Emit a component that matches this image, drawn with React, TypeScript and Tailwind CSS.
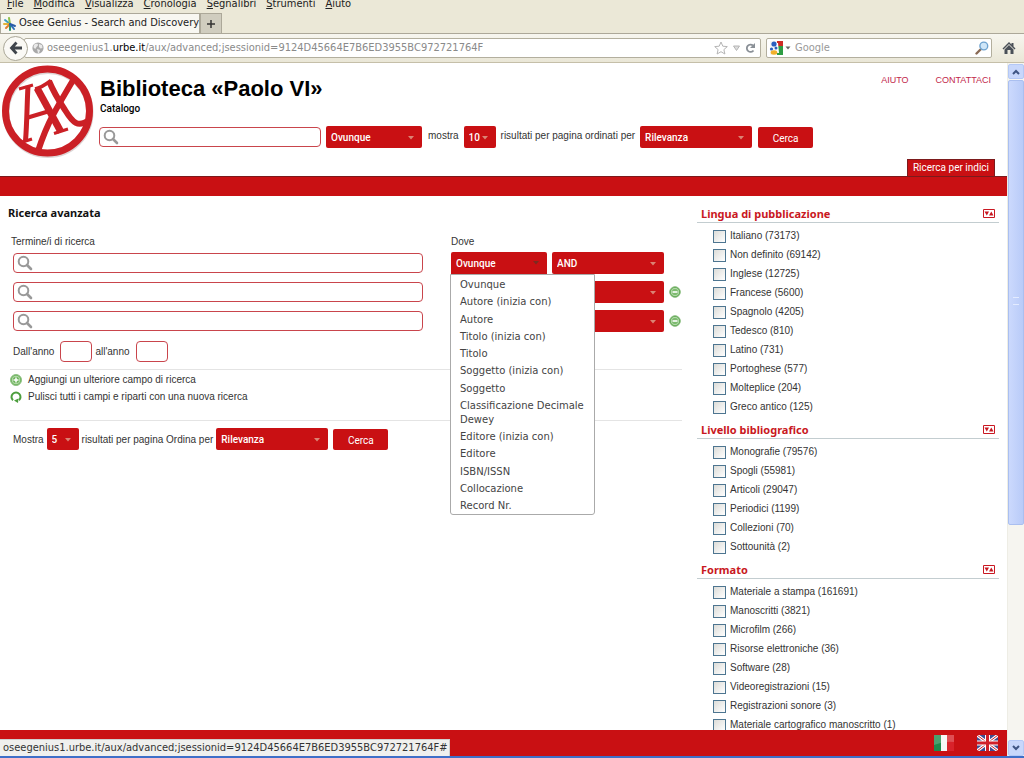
import { useState } from 'react';

const UI = "font-['DejaVu_Sans_Condensed','DejaVu_Sans',sans-serif]";
const CONTROL = "font-['Roboto',sans-serif]";
const HEADING = "font-['Noto_Sans',sans-serif]";
const ARIAL = "font-['Liberation_Sans',sans-serif]";

const menus = ['File', 'Modifica', 'Visualizza', 'Cronologia', 'Segnalibri', 'Strumenti', 'Aiuto'];

const fields = [
  'Ovunque',
  'Autore (inizia con)',
  'Autore',
  'Titolo (inizia con)',
  'Titolo',
  'Soggetto (inizia con)',
  'Soggetto',
  'Classificazione Decimale Dewey',
  'Editore (inizia con)',
  'Editore',
  'ISBN/ISSN',
  'Collocazione',
  'Record Nr.',
];

const facets = [
  {
    title: 'Lingua di pubblicazione',
    items: [
      'Italiano (73173)',
      'Non definito (69142)',
      'Inglese (12725)',
      'Francese (5600)',
      'Spagnolo (4205)',
      'Tedesco (810)',
      'Latino (731)',
      'Portoghese (577)',
      'Molteplice (204)',
      'Greco antico (125)',
    ],
  },
  {
    title: 'Livello bibliografico',
    items: [
      'Monografie (79576)',
      'Spogli (55981)',
      'Articoli (29047)',
      'Periodici (1199)',
      'Collezioni (70)',
      'Sottounità (2)',
    ],
  },
  {
    title: 'Formato',
    items: [
      'Materiale a stampa (161691)',
      'Manoscritti (3821)',
      'Microfilm (266)',
      'Risorse elettroniche (36)',
      'Software (28)',
      'Videoregistrazioni (15)',
      'Registrazioni sonore (3)',
      'Materiale cartografico manoscritto (1)',
    ],
  },
];

const Favicon = () => (
  <svg viewBox="0 0 14 14" className="h-[14px] w-[14px] shrink-0" fill="none" strokeWidth="2" strokeLinecap="round">
    <path d="M7 7 2 3" stroke="#3f9fc4" />
    <path d="M7 7 6 1" stroke="#8fc04a" />
    <path d="M7 7 1 7" stroke="#e2b33a" />
    <path d="M7 7 3 11" stroke="#e07f2e" />
    <path d="M7 7 7 13" stroke="#2f8f6a" />
    <path d="M7 7 11 12" stroke="#2c6fb7" />
    <path d="M7 7 12 9" stroke="#2a5ca8" />
  </svg>
);

const Globe = () => (
  <svg viewBox="0 0 12 12" className="h-3 w-3 shrink-0">
    <circle cx="6" cy="6" r="5.6" fill="#a9a9a9" />
    <path d="M2 3c2-2 4-1 4 0S4 5 4 6 2 7 1.500 5zM7 2l3 1 .5 3-2 .5L7 5zM5 7l3 1-1 3H6z" fill="#e9e9e9" />
  </svg>
);

const Logo = () => (
  <svg viewBox="0 0 94 96" className="h-24 w-[94px] shrink-0" fill="none" stroke="#cb2026">
    <circle cx="48" cy="49.500" r="42" stroke="#ddd5d5" strokeWidth="7" />
    <circle cx="47.500" cy="48" r="42" strokeWidth="7" />
    <path d="M75 14C66 29 60 39 53 52S42 76 38 88" strokeWidth="6" />
    <path d="M37 25 61 69" strokeWidth="7" />
    <path d="M28 23C27 40 27 60 25.500 78" strokeWidth="5" />
    <path d="M28 54.500 48 48.500" strokeWidth="4" />
    <path d="M19 26 33 22M21 79.500 32 76M54 70.500 68 66" strokeWidth="3" />
    <path d="M35 26C41 25 45 22 51 17.500" strokeWidth="3.500" />
    <path d="M49 18C54 30 59 38 65 47 73 60 78 65 89 57" strokeWidth="6" />
  </svg>
);

const SearchIcon = () => (
  <svg viewBox="0 0 16 16" className="h-4 w-4 shrink-0" fill="none" stroke="#999">
    <circle cx="6.500" cy="6.500" r="4.800" strokeWidth="2" />
    <path d="M10 10 14 14" strokeWidth="2.600" strokeLinecap="round" />
  </svg>
);

const Plus = () => (
  <svg viewBox="0 0 12 12" className="h-3 w-3 shrink-0">
    <circle cx="6" cy="6" r="5.500" fill="#6cb35b" stroke="#8fc184" />
    <circle cx="6" cy="6" r="3.800" fill="none" stroke="#cfe8c9" strokeWidth="0.800" />
    <path d="M6 3.500v5M3.500 6h5" stroke="#fff" strokeWidth="1.500" />
  </svg>
);

const Minus = () => (
  <svg viewBox="0 0 12 12" className="h-3 w-3 shrink-0">
    <circle cx="6" cy="6" r="5.300" fill="#4f9f40" stroke="#8abd7f" />
    <circle cx="6" cy="6" r="3.800" fill="#7dbb6f" stroke="#cfe8c9" strokeWidth="0.800" />
    <path d="M3.500 6h5" stroke="#fff" strokeWidth="1.600" />
  </svg>
);

const Reload = () => (
  <svg viewBox="0 0 12 12" className="h-3 w-3 shrink-0" fill="none" stroke="#4c9e3d" strokeWidth="2">
    <path d="M3 9.300A4.500 4.500 0 1 1 9 9.300" />
    <path d="M4 9.500 8.500 7.500 8 12z" fill="#4c9e3d" stroke="none" />
  </svg>
);

const SearchInput = ({ label, className = '' }: { label: string; className?: string }) => (
  <label className={`flex h-[20px] items-center rounded-[4px] border border-[#c9454c] bg-white pl-[3px] ${className}`}>
    <SearchIcon />
    <input aria-label={label} className="h-4 w-full min-w-0 bg-transparent px-1 text-[11px] outline-none" />
  </label>
);

type SelectProps = {
  label: string;
  options: string[];
  className: string;
};

const RedSelect = ({ label, options, className }: SelectProps) => (
  <span className={`relative inline-block h-[22px] shrink-0 ${className}`}>
    <select
      aria-label={label}
      className={`block h-full w-full appearance-none rounded-[2px] bg-[#c91013] pl-[5px] text-[10px] font-medium text-white outline-none ${CONTROL}`}
    >
      {options.map((option) => (
        <option key={option}>{option}</option>
      ))}
    </select>
    <svg viewBox="0 0 6 4" className="pointer-events-none absolute top-[10px] right-2 h-1 w-[6px]">
      <path d="M0 0h6L3 3.500z" fill="#dc8374" />
    </svg>
  </span>
);

const SearchButton = () => (
  <button className={`h-[21px] w-[55px] shrink-0 rounded-[2px] bg-[#c91013] pt-[2px] text-[10px] text-white ${CONTROL}`}>
    Cerca
  </button>
);

const BrowserBar = () => (
  <div className={`shrink-0 bg-[#ebe8d7] ${UI}`}>
    <div className="flex h-[13px] items-end gap-[10px] overflow-hidden pl-[7px] text-[11px] leading-[18px] text-[#222]">
      {menus.map((menu) => (
        <button key={menu} className="h-[18px]">
          <span className="underline">{menu[0]}</span>
          {menu.slice(1)}
        </button>
      ))}
    </div>
    <div className="flex h-[21px] border-b border-[#aca899]">
      <div className="flex w-[200px] items-center gap-[2px] overflow-hidden border border-b-0 border-[#aca899] bg-[#f8f7f1] pl-[2px] text-[11px] whitespace-nowrap text-[#222]">
        <Favicon />
        Osee Genius - Search and Discovery
      </div>
      <button aria-label="Nuova scheda" className="flex w-[22px] items-center justify-center border border-b-0 border-[#aca899] bg-[#d0cdbf]">
        <svg viewBox="0 0 8 8" className="h-2 w-2">
          <path d="M4 0v8M0 4h8" stroke="#333" strokeWidth="1.500" />
        </svg>
      </button>
    </div>
    <div className="flex h-[29px] items-center border-b border-[#c5bfa9] bg-gradient-to-b from-[#f7f6ef] to-[#eae7d7] pr-2">
      <button aria-label="Indietro" className="z-10 ml-[3px] flex h-[25px] w-[25px] shrink-0 items-center justify-center rounded-full border border-[#aaa797] bg-[#faf9f5]">
        <svg viewBox="0 0 14 14" className="h-[14px] w-[14px]" fill="none" stroke="#3f444b" strokeWidth="2.800">
          <path d="M7.500 1.500 2.500 7l5 5.500M2.500 7H13" />
        </svg>
      </button>
      <div className="-ml-1 flex h-5 flex-1 items-center rounded-[2px] border border-[#b3af9e] bg-white pr-1 pl-[7px] text-[11px]">
        <Globe />
        <span className="ml-[3px] flex-1 whitespace-nowrap text-[#8a8a8a]">
          oseegenius1.<span className="text-black">urbe.it</span>/aux/advanced;jsessionid=9124D45664E7B6ED3955BC972721764F
        </span>
        <svg viewBox="0 0 42 14" className="h-[14px] w-[42px] shrink-0" fill="none">
          <path d="m7 1 1.800 4.200 4.500.4-3.400 3 1 4.400L7 10.700 3.100 13l1-4.400-3.400-3 4.500-.4z" stroke="#b5b5b5" />
          <path d="M19.500 5h6l-3 4.500z" fill="#ddd" stroke="#b5b5b5" />
          <path d="M39.500 9.500A3.700 3.700 0 1 1 39 4.500" stroke="#8a9097" strokeWidth="1.800" />
          <path d="M41 2v5h-5z" fill="#8a9097" />
        </svg>
      </div>
      <label className="ml-[5px] flex h-5 w-[226px] shrink-0 items-center rounded-[2px] border border-[#b3af9e] bg-white px-[2px]">
        <svg viewBox="0 0 22 14" className="h-[14px] w-[22px] shrink-0">
          <rect x="1" width="13" height="14" fill="#f6f6f6" />
          <path d="M8 0h6v5H8z" fill="#cf2b26" />
          <path d="M8 5h6v9H8z" fill="#2e9c43" />
          <path d="M9 2H7v10h3z" fill="#fff" />
          <circle cx="5" cy="3" r="2.600" fill="#2a5fc0" />
          <circle cx="2.500" cy="8" r="1.600" fill="#2a5fc0" />
          <circle cx="7" cy="7" r="1.500" fill="#2a5fc0" />
          <ellipse cx="5" cy="11.500" rx="3.300" ry="2.200" fill="#f1b02a" />
          <path d="M16.500 5.500h5L19 8.500z" fill="#666" />
        </svg>
        <input aria-label="Cerca con Google" placeholder="Google" className="w-full min-w-0 pl-1 text-[11px] outline-none placeholder:text-[#999]" />
        <svg viewBox="0 0 14 14" className="h-[14px] w-[14px] shrink-0" fill="none">
          <path d="M5.500 8.500 1.500 12.500" stroke="#8a6a55" strokeWidth="2.400" strokeLinecap="round" />
          <circle cx="8.800" cy="5" r="3.900" fill="#cfe6f8" stroke="#6fa3cf" strokeWidth="1.400" />
        </svg>
      </label>
      <button aria-label="Pagina iniziale" className="ml-[10px]">
        <svg viewBox="0 0 14 14" className="h-[14px] w-[14px]">
          <path d="M7 1 0.500 7.500l1 1L7 3l5.500 5.500 1-1L11.500 5.500V2h-2v1.500z" fill="#4a5058" />
          <path d="M2.500 8.500 7 4l4.500 4.500V13h-3V9h-3v4h-3z" fill="#4a5058" />
        </svg>
      </button>
    </div>
  </div>
);

const Header = () => (
  <header className="shrink-0">
    <div className="flex h-[113px]">
      <Logo />
      <div className="flex min-w-0 flex-1 flex-col pl-[5px]">
        <div className="flex justify-between">
          <div className="pt-3">
            <h1 className="pl-px text-[22px] leading-7 font-bold text-black">Biblioteca «Paolo VI»</h1>
            <p className={`pl-px text-[10px] leading-3 font-medium text-black ${CONTROL}`}>Catalogo</p>
          </div>
          <nav className="flex gap-[27px] pt-[9px] pr-4 text-[9px] leading-4 text-[#c2274a]">
            <a href="#aiuto">AIUTO</a>
            <a href="#contattaci">CONTATTACI</a>
          </nav>
        </div>
        <div className="mt-[11px] flex items-center">
          <SearchInput label="Cerca nel catalogo" className="w-[222px]" />
          <RedSelect label="Campo" options={fields} className="ml-[5px] w-24" />
          <span className="mr-[5px] ml-[6px] pb-1">mostra</span>
          <RedSelect label="Risultati per pagina" options={['10', '20', '50']} className="w-8" />
          <span className="mx-[5px] pb-1 whitespace-nowrap">risultati per pagina ordinati per</span>
          <RedSelect label="Ordinamento" options={['Rilevanza', 'Titolo', 'Autore']} className="mr-[6px] w-28" />
          <SearchButton />
        </div>
        <a
          href="#indici"
          className={`mt-auto mr-3 self-end border border-b-0 border-[#7c1a1c] bg-[#c91013] px-[5px] text-[10px] leading-4 text-white ${CONTROL}`}
        >
          Ricerca per indici
        </a>
      </div>
    </div>
    <div className="h-5 border-t border-[#7c1a1c] bg-[#c91013]" />
  </header>
);

const FieldPicker = () => {
  const [open, setOpen] = useState(true);
  const [field, setField] = useState('Ovunque');

  return (
    <div className="relative">
      <button
        aria-expanded={open}
        onClick={() => setOpen(!open)}
        className={`flex h-[22px] w-24 items-center justify-between rounded-t-[2px] bg-[#c91013] pr-2 pl-[5px] text-[10px] font-medium text-white ${CONTROL}`}
      >
        {field}
        <svg viewBox="0 0 6 4" className="h-1 w-[6px]">
          <path d="M0 0h6L3 3.500z" fill="#7c2b20" />
        </svg>
      </button>
      {open && (
        <ul className="absolute top-[22px] -left-px z-20 flex h-[241px] w-[145px] flex-col justify-between rounded-b-[3px] border border-[#aaa] bg-white pt-[3px] pb-px font-['DejaVu_Sans',sans-serif] text-[10px] leading-[14px] text-[#444]">
          {fields.map((name) => (
            <li key={name}>
              <button
                className="block w-full pl-[9px] text-left"
                onClick={() => {
                  setField(name);
                  setOpen(false);
                }}
              >
                {name}
              </button>
            </li>
          ))}
        </ul>
      )}
    </div>
  );
};

const AdvancedSearch = () => (
  <section className="min-w-0 flex-1 pt-2 pr-[15px] pl-2">
    <h2 className={`text-[11px] leading-[18px] font-bold text-[#111] ${HEADING}`}>Ricerca avanzata</h2>
    <div className="mt-[10px] grid grid-cols-[minmax(0,1fr)_231px] pl-[5px]">
      <div className="-ml-[2px] leading-5">Termine/i di ricerca</div>
      <div className="leading-5">Dove</div>
      {[1, 2, 3].map((row) => (
        <div key={row} className="col-span-2 mb-[7px] grid grid-cols-subgrid items-center">
          <SearchInput label={`Termine ${row}`} className="mr-7" />
          <div className="flex items-center gap-[5px]">
            {row === 1 ? <FieldPicker /> : <RedSelect label={`Dove ${row}`} options={fields} className="w-24" />}
            <RedSelect label={`Operatore ${row}`} options={['AND', 'OR', 'NOT']} className="w-28" />
            {row > 1 && (
              <button aria-label="Rimuovi campo">
                <Minus />
              </button>
            )}
          </div>
        </div>
      ))}
    </div>
    <div className="mt-[2px] flex items-center pl-[5px]">
      <label className="flex items-center gap-[6px]">
        Dall'anno
        <input className="h-[21px] w-8 rounded-[4px] border border-[#c9454c]" />
      </label>
      <label className="ml-[3px] flex items-center gap-[6px]">
        all'anno
        <input className="h-[21px] w-8 rounded-[4px] border border-[#c9454c]" />
      </label>
    </div>
    <div className="mt-[7px] ml-[2px] border-y border-[#e4e4e4] pt-px pb-[15px] leading-[17px]">
      <button className="flex items-center gap-[6px]">
        <Plus />
        Aggiungi un ulteriore campo di ricerca
      </button>
      <button className="flex items-center gap-[6px]">
        <Reload />
        Pulisci tutti i campi e riparti con una nuova ricerca
      </button>
    </div>
    <div className="mt-[7px] flex items-center pl-[5px]">
      Mostra
      <RedSelect label="Risultati per pagina" options={['5', '10', '20']} className="mx-[3px] w-8" />
      risultati per pagina Ordina per
      <RedSelect label="Ordina per" options={['Rilevanza', 'Titolo', 'Autore']} className="mr-[5px] ml-[3px] w-28" />
      <SearchButton />
    </div>
  </section>
);

const Facets = () => (
  <aside className="w-[302px] shrink-0 pt-[9px]">
    {facets.map(({ title, items }) => (
      <section key={title} className="mb-1">
        <h3 className={`flex items-center justify-between border-b border-[#c3cdd0] pr-1 pl-1 text-[11px] leading-[17px] font-bold text-[#c91822] ${HEADING}`}>
          {title}
          <button aria-label={`Espandi ${title}`}>
            <svg viewBox="0 0 12 9" className="h-[9px] w-3">
              <path d="M.5.5h11v8H.5z" fill="#fff" stroke="#c91822" />
              <path d="M1.500 2.500h4.500L3.800 6.500zM6 6.500h4.500L8.300 2.500z" fill="#c91822" />
            </svg>
          </button>
        </h3>
        <ul className="pt-1 pl-4">
          {items.map((item) => (
            <li key={item}>
              <label className="flex h-[19px] items-center gap-1">
                <input
                  type="checkbox"
                  className="h-[13px] w-[13px] appearance-none border border-[#4d7590] bg-gradient-to-br from-[#dcdcd8] to-white"
                />
                <span className="pb-[2px] leading-4 whitespace-nowrap">{item}</span>
              </label>
            </li>
          ))}
        </ul>
      </section>
    ))}
  </aside>
);

const ItalianFlag = () => (
  <svg viewBox="0 0 20 16" className="h-4 w-5">
    <path d="M0 0h7v16H0z" fill="#1f8a4c" />
    <path d="M7 0h6v16H7z" fill="#f6f6f6" />
    <path d="M13 0h7v16h-7z" fill="#d8222a" />
    <path d="M0 0h20v7Q10 6 0 10z" fill="#fff" fillOpacity="0.200" />
  </svg>
);

const BritishFlag = () => (
  <svg viewBox="0 0 21 16" className="h-4 w-[21px]">
    <path d="M0 0h21v16H0z" fill="#3f4c90" />
    <path d="m0 0 21 16M21 0 0 16" stroke="#fff" strokeWidth="3" />
    <path d="m0 0 21 16M21 0 0 16" stroke="#d0202a" strokeWidth="1" />
    <path d="M10.500 0v16M0 8h21" stroke="#fff" strokeWidth="5" />
    <path d="M10.500 0v16M0 8h21" stroke="#d0202a" strokeWidth="3" />
  </svg>
);

const Chevron = ({ up = false }: { up?: boolean }) => (
  <svg viewBox="0 0 8 6" className="h-[6px] w-2" fill="none" stroke="#3f5583" strokeWidth="2">
    <path d={up ? 'M1 5l3-3 3 3' : 'M1 1l3 3 3-3'} />
  </svg>
);

const Scrollbar = () => (
  <div className="flex w-[17px] shrink-0 flex-col border-l border-[#eeede5] bg-[#f6f5f0]">
    <button aria-label="Scorri su" className="mt-px flex h-[15px] shrink-0 items-center justify-center rounded-[2px] border border-[#b4c8f6] bg-[#c8d7fb]">
      <Chevron up />
    </button>
    <div className="mt-px h-[445px] rounded-[2px] border border-[#aabff0] bg-gradient-to-r from-[#cbd9fd] to-[#b9cbf8]">
      <div className="mx-auto mt-[216px] h-2 w-[6px] border-y border-[#e3ebff]" />
    </div>
    <button aria-label="Scorri giù" className="mt-auto flex h-4 shrink-0 items-center justify-center rounded-[2px] border border-[#b4c8f6] bg-[#c8d7fb]">
      <Chevron />
    </button>
  </div>
);

const App = () => (
  <div className={`flex h-screen flex-col overflow-hidden border-b-2 border-[#3f6fc8] bg-white text-[10px] text-[#333] ${ARIAL}`}>
    <BrowserBar />
    <div className="flex min-h-0 flex-1">
      <div className="relative flex min-w-0 flex-1 flex-col">
        <Header />
        <main className="flex min-h-0 flex-1 overflow-hidden">
          <AdvancedSearch />
          <div className="pr-2">
            <Facets />
          </div>
        </main>
        <footer className="flex h-[26px] shrink-0 items-center justify-end gap-[23px] bg-[#c91013] pr-[9px]">
          <button aria-label="Italiano">
            <ItalianFlag />
          </button>
          <button aria-label="English">
            <BritishFlag />
          </button>
        </footer>
        <div className={`absolute bottom-0 left-0 h-[17px] border-t border-r border-[#cfcfcf] bg-[#f0f0ee] pr-px pl-[3px] text-[11px] leading-4 whitespace-nowrap ${UI}`}>
          oseegenius1.urbe.it/aux/advanced;jsessionid=9124D45664E7B6ED3955BC972721764F#
        </div>
      </div>
      <Scrollbar />
    </div>
  </div>
);

export default App;
